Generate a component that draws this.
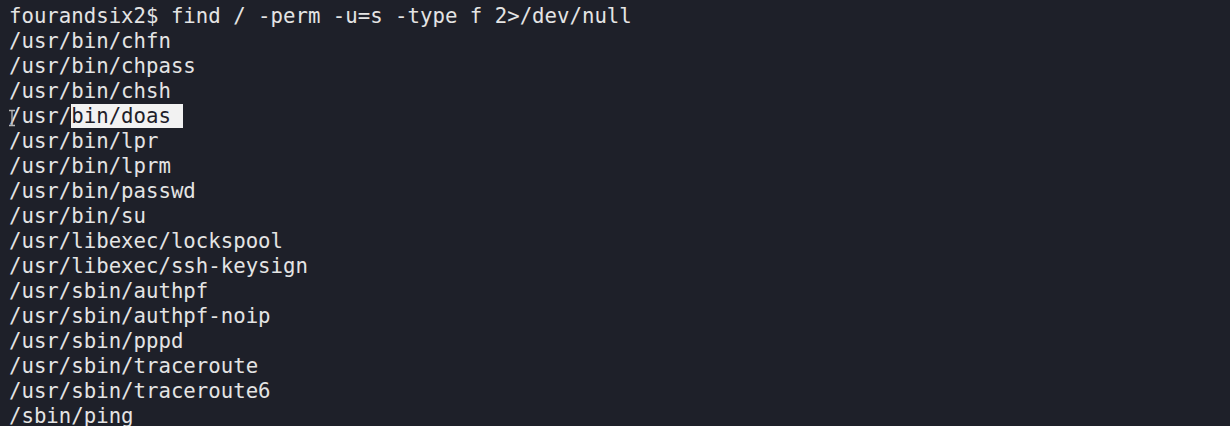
import React from 'react';

const lines = [
  '/usr/bin/chfn',
  '/usr/bin/chpass',
  '/usr/bin/chsh',
  null,
  '/usr/bin/lpr',
  '/usr/bin/lprm',
  '/usr/bin/passwd',
  '/usr/bin/su',
  '/usr/libexec/lockspool',
  '/usr/libexec/ssh-keysign',
  '/usr/sbin/authpf',
  '/usr/sbin/authpf-noip',
  '/usr/sbin/pppd',
  '/usr/sbin/traceroute',
  '/usr/sbin/traceroute6',
  '/sbin/ping',
];

export default function App() {
  return (
    <div className="w-[1230px] h-[426px] overflow-hidden bg-[#1e2029] text-[#e4e4e4] pl-[9px] pt-[4px] font-['DejaVu_Sans_Mono',monospace] text-[20.7px] leading-[25px] whitespace-pre">
      <div>fourandsix2$ find / -perm -u=s -type f 2&gt;/dev/null</div>
      {lines.map((l, i) =>
        l === null ? (
          <div key={i} className="relative">
            <span>/usr/</span>
            <span className="bg-[#f2f2f2] text-[#1e2029]">bin/doas </span>
            {/* mouse I-beam cursor */}
            <svg className="absolute left-[-1px] top-[5px]" width="8" height="18" viewBox="0 0 8 18">
              <path d="M1 1.5h2.5l0.5 1 0.5-1H7M4 2.5v13M1 16.5h2.5l0.5-1 0.5 1H7" fill="none" stroke="#b8b8b8" strokeWidth="1.3" />
            </svg>
          </div>
        ) : (
          <div key={i}>{l}</div>
        )
      )}
    </div>
  );
}
